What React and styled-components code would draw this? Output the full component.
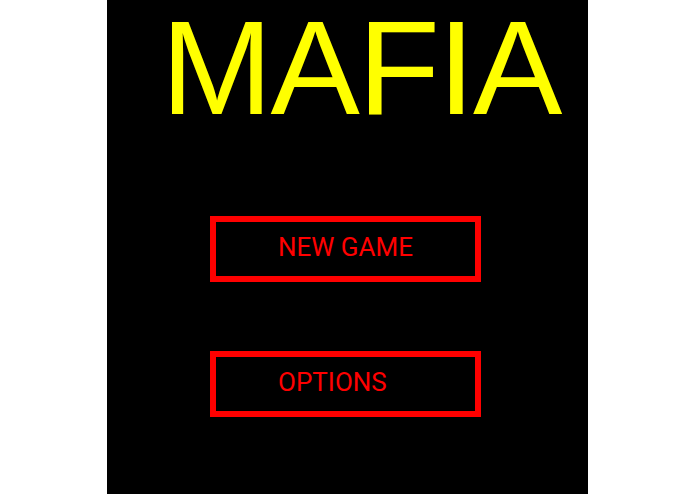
import React from "react";
import styled, { createGlobalStyle } from "styled-components";

const GlobalStyle = createGlobalStyle`
  html, body {
    margin: 0;
    padding: 0;
    background: #fff;
  }
`;

const Screen = styled.div`
  width: 481px;
  height: 494px;
  margin-left: 107px;
  background: #000;
  display: flex;
  flex-direction: column;
  padding-top: 1px;
  box-sizing: border-box;
`;

const Title = styled.h1`
  margin: 0 0 81px 0;
  padding-left: 54px;
  font-family: "Liberation Sans", Arial, sans-serif;
  font-weight: 400;
  font-size: 134px;
  letter-spacing: -2px;
  line-height: 1;
  color: #ffff00;
  white-space: nowrap;
`;

const Menu = styled.div`
  display: flex;
  flex-direction: column;
  gap: 69px;
  padding-left: 103px;
`;

const MenuButton = styled.button`
  width: 271px;
  height: 66px;
  box-sizing: border-box;
  border: 6px solid #ff0000;
  background: #000;
  color: #ff0000;
  font-family: Roboto, "Noto Sans", sans-serif;
  font-size: 26px;
  display: flex;
  align-items: center;
  padding: 0 0 4px 62px;
  cursor: pointer;
  text-align: left;
`;

export default function App() {
  return (
    <>
      <GlobalStyle />
      <Screen>
        <Title>MAFIA</Title>
        <Menu>
          <MenuButton>NEW GAME</MenuButton>
          <MenuButton>OPTIONS</MenuButton>
        </Menu>
      </Screen>
    </>
  );
}
